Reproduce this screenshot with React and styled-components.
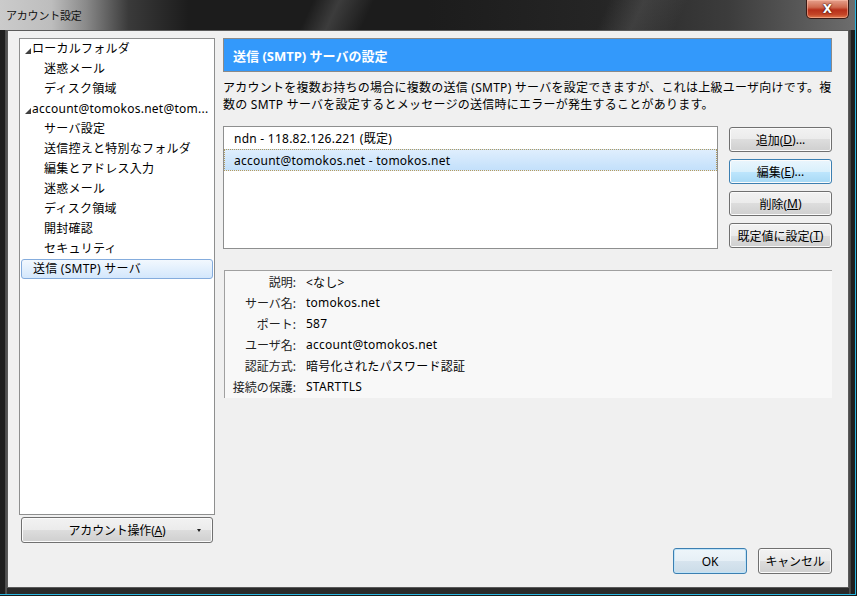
import React from 'react'
import styled, { createGlobalStyle, css } from 'styled-components'

const GlobalStyle = createGlobalStyle`
  html, body {
    margin: 0;
    padding: 0;
    background: #000;
  }
  body {
    font-family: "Noto Sans", "Noto Sans CJK JP", sans-serif;
    font-size: 12px;
    letter-spacing: 0.25px;
    color: #000;
  }
`

const treeItems = [
  { label: 'ローカルフォルダ', level: 0 },
  { label: '迷惑メール', level: 1 },
  { label: 'ディスク領域', level: 1 },
  { label: 'account@tomokos.net@tom...', level: 0 },
  { label: 'サーバ設定', level: 1 },
  { label: '送信控えと特別なフォルダ', level: 1 },
  { label: '編集とアドレス入力', level: 1 },
  { label: '迷惑メール', level: 1 },
  { label: 'ディスク領域', level: 1 },
  { label: '開封確認', level: 1 },
  { label: 'セキュリティ', level: 1 },
  { label: '送信 (SMTP) サーバ', level: 0, plain: true, selected: true },
]

const details = [
  ['説明:', '<なし>'],
  ['サーバ名:', 'tomokos.net'],
  ['ポート:', '587'],
  ['ユーザ名:', 'account@tomokos.net'],
  ['認証方式:', '暗号化されたパスワード認証'],
  ['接続の保護:', 'STARTTLS'],
]

const App = () => {
  return (
    <>
      <GlobalStyle />
      <Window>
        <TitleBar>
          <Title>アカウント設定</Title>
          <CloseButton>X</CloseButton>
        </TitleBar>
        <Frame>
          <Client>
            <Body>
              <Sidebar>
                <Tree>
                  {treeItems.map((item, i) => (
                    <TreeRow key={i} $level={item.level} $selected={item.selected}>
                      {item.level === 0 && !item.plain && <Expander />}
                      <TreeLabel>{item.label}</TreeLabel>
                    </TreeRow>
                  ))}
                </Tree>
                <MenuButton>
                  <span>
                    アカウント操作(<u>A</u>)
                  </span>
                  <DropArrow />
                </MenuButton>
              </Sidebar>

              <Main>
                <Header>送信 (SMTP) サーバの設定</Header>
                <Description>
                  アカウントを複数お持ちの場合に複数の送信 (SMTP) サーバを設定できますが、これは上級ユーザ向けです。複
                  <br />
                  数の SMTP サーバを設定するとメッセージの送信時にエラーが発生することがあります。
                </Description>

                <ServerRow>
                  <ServerList>
                    <ServerItem>ndn - 118.82.126.221 (既定)</ServerItem>
                    <ServerItem $selected>account@tomokos.net - tomokos.net</ServerItem>
                  </ServerList>
                  <ButtonColumn>
                    <Button>
                      追加(<u>D</u>)...
                    </Button>
                    <Button $hover>
                      編集(<u>E</u>)...
                    </Button>
                    <Button>
                      削除(<u>M</u>)
                    </Button>
                    <Button>
                      既定値に設定(<u>T</u>)
                    </Button>
                  </ButtonColumn>
                </ServerRow>

                <Details>
                  {details.map(([k, v]) => (
                    <DetailRow key={k}>
                      <DetailLabel>{k}</DetailLabel>
                      <DetailValue>{v}</DetailValue>
                    </DetailRow>
                  ))}
                </Details>
              </Main>
            </Body>

            <Footer>
              <DialogButton $default>OK</DialogButton>
              <DialogButton>キャンセル</DialogButton>
            </Footer>
          </Client>
        </Frame>
      </Window>
    </>
  )
}

export default App

const Window = styled.div`
  width: 857px;
  height: 596px;
  box-sizing: border-box;
  display: flex;
  flex-direction: column;
  position: relative;
  background: #1f1f1f;
  overflow: hidden;

  &::after {
    content: '';
    position: absolute;
    inset: 0;
    pointer-events: none;
    box-shadow: inset -1px -1px 0 #1a1a1a, inset -2px -2px 0 #2ab6e0;
  }
`

const TitleBar = styled.div`
  height: 30px;
  flex: none;
  display: flex;
  align-items: flex-start;
  justify-content: space-between;
  padding: 0 8px 0 6px;
  background:
    linear-gradient(115deg, transparent 36%, rgba(120,120,120,0.35) 39%, transparent 43%,
      transparent 70%, rgba(110,110,110,0.3) 74%, transparent 79%),
    linear-gradient(90deg, #cbcbcb 0%, #bdbdbd 6%, #8a8a8a 10%, #3a3a3a 15%, #1c1c1c 22%, #1c1c1c 50%,
      #252525 70%, #3c3c3c 85%, #6e6e6e 100%);
`

const Title = styled.div`
  margin-top: 7px;
  font-family: "Noto Sans CJK JP", sans-serif;
  font-size: 11px;
  letter-spacing: -0.2px;
  color: #111;
`

const CloseButton = styled.div`
  width: 43px;
  height: 19px;
  box-sizing: border-box;
  border: 1px solid #3a1a14;
  border-top: none;
  border-radius: 0 0 5px 5px;
  background: linear-gradient(#e6a08c 0%, #cf6a50 40%, #b8301a 55%, #c44426 80%, #e07a4c 100%);
  box-shadow: inset 0 0 0 1px rgba(255,200,180,0.5);
  display: flex;
  align-items: center;
  justify-content: center;
  font-family: "DejaVu Sans", sans-serif;
  font-weight: bold;
  font-size: 12px;
  color: #fff;
  text-shadow: 0 0 2px #3a0a00, 0 0 1px #3a0a00;
`

const Frame = styled.div`
  flex: 1;
  display: flex;
  padding: 0 8px 8px 7px;
  background: linear-gradient(90deg, #1e1e1e 0, #1e1e1e 5px, #7a7a7a 6px, #2a2a2a 7px, #2a2a2a calc(100% - 8px), #6a6a6a calc(100% - 7px), #1f1f1f calc(100% - 6px));
`

const Client = styled.div`
  flex: 1;
  display: flex;
  flex-direction: column;
  background: #f0f0f0;
  border: 1px solid #5a5a5a;
  padding: 7px 16px 13px 11px;
`

const Body = styled.div`
  display: flex;
  gap: 8px;
  height: 505px;
`

const Sidebar = styled.div`
  width: 196px;
  display: flex;
  flex-direction: column;
  gap: 2px;
`

const Tree = styled.div`
  flex: 1;
  background: #fff;
  border: 1px solid #8e8f8f;
`

const TreeRow = styled.div`
  height: 20px;
  box-sizing: border-box;
  display: flex;
  align-items: center;
  padding-left: ${(p) => (p.$level === 1 ? 24 : 5)}px;
  white-space: nowrap;
  overflow: hidden;
  ${(p) =>
    p.$selected &&
    css`
      margin: 0 1px;
      padding-left: 11px;
      border: 1px solid #84acdd;
      border-radius: 3px;
      background: linear-gradient(#f2f8fe, #d3e7fc);
    `}
`

const Expander = styled.span`
  width: 0;
  height: 0;
  margin-right: 1px;
  margin-top: 3px;
  border-right: 6px solid #404040;
  border-top: 6px solid transparent;
`

const TreeLabel = styled.span`
  line-height: 20px;
`

const MenuButton = styled.div`
  height: 26px;
  margin: 0 2px;
  box-sizing: border-box;
  display: flex;
  align-items: center;
  justify-content: center;
  position: relative;
  border: 1px solid #707070;
  border-radius: 3px;
  background: linear-gradient(#f2f2f2 0%, #ebebeb 50%, #dddddd 50%, #cfcfcf 100%);
  box-shadow: inset 0 0 0 1px #fbfbfb;
  letter-spacing: -0.2px;
`

const DropArrow = styled.span`
  position: absolute;
  right: 11px;
  top: 11px;
  width: 0;
  height: 0;
  border-left: 2px solid transparent;
  border-right: 2px solid transparent;
  border-top: 3px solid #202020;
`

const Main = styled.div`
  width: 609px;
  display: flex;
  flex-direction: column;
`

const Header = styled.div`
  height: 34px;
  box-sizing: border-box;
  display: flex;
  align-items: center;
  padding-left: 9px;
  background: #3399fb;
  border: 1px solid #8a8a8a;
  color: #fff;
  font-weight: bold;
  font-size: 13px;
  letter-spacing: 0;
`

const Description = styled.div`
  margin-top: 7px;
  line-height: 17px;
  white-space: nowrap;
`

const ServerRow = styled.div`
  margin-top: 13px;
  display: flex;
  gap: 11px;
  height: 123px;
`

const ServerList = styled.div`
  width: 495px;
  box-sizing: border-box;
  background: #fff;
  border: 1px solid #8e8f8f;
`

const ServerItem = styled.div`
  height: 22px;
  box-sizing: border-box;
  display: flex;
  align-items: center;
  padding-left: 9px;
  border: 1px solid transparent;
  ${(p) =>
    p.$selected &&
    css`
      border: 1px dotted #b49a5c;
      background: linear-gradient(#dfeefd, #c3e0fb);
    `}
`

const ButtonColumn = styled.div`
  width: 103px;
  display: flex;
  flex-direction: column;
  gap: 7px;
  padding-top: 1px;
`

const buttonBase = css`
  box-sizing: border-box;
  display: flex;
  align-items: center;
  justify-content: center;
  border: 1px solid #707070;
  border-radius: 3px;
  background: linear-gradient(#f2f2f2 0%, #ebebeb 50%, #dddddd 50%, #cfcfcf 100%);
  box-shadow: inset 0 0 0 1px #fbfbfb;
  white-space: nowrap;
`

const Button = styled.div`
  ${buttonBase}
  height: 25px;
  letter-spacing: 0;
  ${(p) =>
    p.$hover &&
    css`
      border-color: #3c7fb1;
      background: linear-gradient(#eaf6fd 0%, #d9f0fc 50%, #bee6fd 50%, #a7d9f5 100%);
    `}
`

const Details = styled.div`
  margin-top: 21px;
  margin-left: 1px;
  height: 128px;
  box-sizing: border-box;
  background: #f8f8f8;
  border-top: 1px solid #a0a0a0;
  border-left: 1px solid #a0a0a0;
`

const DetailRow = styled.div`
  height: 21px;
  display: flex;
  align-items: center;
  gap: 10px;
`

const DetailLabel = styled.span`
  width: 71px;
  text-align: right;
  color: #222;
  letter-spacing: 0;
`

const DetailValue = styled.span``

const Footer = styled.div`
  margin-top: 5px;
  display: flex;
  justify-content: flex-end;
  gap: 11px;
`

const DialogButton = styled.div`
  ${buttonBase}
  width: 74px;
  height: 26px;
  letter-spacing: -0.2px;
  ${(p) =>
    p.$default &&
    css`
      border-color: #3c7fb1;
      background: linear-gradient(#eef5fa 0%, #e6eff6 50%, #d7e4ee 50%, #cbdce8 100%);
      box-shadow: inset 0 0 0 1px #bfe3f8;
    `}
`
